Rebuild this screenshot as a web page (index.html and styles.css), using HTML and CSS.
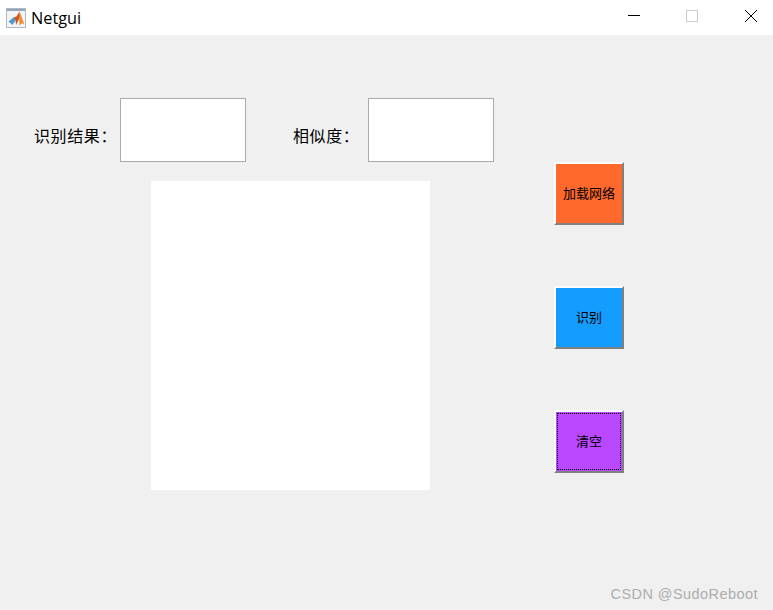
FILE: index.html
```html
<!DOCTYPE html>
<html lang="zh">
<head>
<meta charset="utf-8">
<title>Netgui</title>
<link rel="stylesheet" href="styles.css">
</head>
<body>
<div class="window">
  <header class="titlebar">
    <div class="app">
      <svg class="app-icon" width="20" height="20" viewBox="0 0 20 20">
        <rect x="0.5" y="0.5" width="19" height="19" fill="#f3f4f6" stroke="#b4b7bb"/>
        <rect x="1" y="1" width="18" height="2" fill="#8fa6bd"/>
        <path d="M2.5 13.5 L8 9 L10 11.5 L6.5 17 Z" fill="#4a9bd0"/>
        <path d="M8 9.5 L10.5 8.5 L13.5 3.5 L14 9 L10 17 L9.5 12 Z" fill="#d4501c"/>
        <path d="M13.5 3.5 C15 6 16 11 18.5 16 C16.5 15 15.5 15 13.5 17.5 C13 13 13.5 8 13.5 3.5 Z" fill="#ee8f30"/>
      </svg>
      <span class="app-name">Netgui</span>
    </div>
    <div class="controls">
      <svg width="14" height="14" viewBox="0 0 14 14"><path d="M1 6.5H13" stroke="#000" fill="none"/></svg>
      <svg width="14" height="14" viewBox="0 0 14 14"><rect x="1.5" y="1.5" width="11" height="11" stroke="#cccccc" fill="none"/></svg>
      <svg class="close" width="14" height="14" viewBox="0 0 14 14"><path d="M1 1L13 13M13 1L1 13" stroke="#000" fill="none"/></svg>
    </div>
  </header>
  <main class="figure">
    <section class="left">
      <div class="fields">
        <label class="label label-result">识别结果：</label>
        <div class="field"></div>
        <label class="label label-sim">相似度：</label>
        <div class="field"></div>
      </div>
      <div class="axes"></div>
    </section>
    <section class="buttons">
      <button class="btn btn-load">加载网络</button>
      <button class="btn btn-run">识别</button>
      <button class="btn btn-clear"><span class="focus">清空</span></button>
    </section>
  </main>
  <div class="watermark">CSDN @SudoReboot</div>
</div>
</body>
</html>
```

FILE: styles.css
```css
* { box-sizing: border-box; }
html, body { margin: 0; padding: 0; }
body {
  width: 773px;
  height: 610px;
  overflow: hidden;
  font-family: "Noto Sans CJK SC", "Liberation Sans", sans-serif;
  color: #000;
}
.window {
  position: relative;
  width: 773px;
  height: 610px;
  display: flex;
  flex-direction: column;
  background: #f0f0f0;
}
.titlebar {
  height: 35px;
  flex: none;
  background: #fff;
  display: flex;
  align-items: center;
  justify-content: space-between;
}
.app {
  display: flex;
  align-items: center;
  gap: 5px;
  padding-left: 6px;
}
.app-icon { display: block; }
.app-name {
  font-family: "Open Sans", sans-serif;
  font-size: 16.3px;
  line-height: 20px;
}
.controls {
  display: flex;
  gap: 44px;
  padding-right: 15px;
  padding-bottom: 3px;
}
.controls svg { display: block; }
.controls .close { margin-left: 1px; }
.figure {
  flex: 1;
  display: flex;
  align-items: flex-start;
  padding-top: 63px;
}
.left {
  width: 554px;
  flex: none;
}
.fields {
  display: flex;
  align-items: center;
  height: 64px;
}
.label {
  font-size: 16px;
  line-height: 20px;
  letter-spacing: 0.6px;
  white-space: nowrap;
  position: relative;
  top: 5px;
}
.label-result { margin-left: 34px; width: 86px; }
.label-sim { margin-left: 47px; width: 75px; }
.field {
  width: 126px;
  height: 64px;
  background: #fff;
  border: 1px solid #ababab;
}
.axes {
  width: 279px;
  height: 309px;
  margin: 19px 0 0 151px;
  background: #fff;
}
.buttons {
  width: 70px;
  flex: none;
  display: flex;
  flex-direction: column;
  gap: 61px;
  padding-top: 64px;
}
.btn {
  width: 70px;
  height: 63px;
  padding: 0 0 2px;
  font-family: inherit;
  font-size: 13px;
  line-height: 16px;
  color: #000;
  border-style: solid;
  border-width: 2px;
  border-color: #fcfcfc #808080 #808080 #fcfcfc;
  display: flex;
  align-items: center;
  justify-content: center;
}
.btn-load { background: #ff692b; }
.btn-run { background: #149cff; }
.btn-clear { background: #b948ff; padding: 1px; }
.focus {
  width: 100%;
  height: 100%;
  padding-bottom: 2px;
  border: 1px dotted #000;
  display: flex;
  align-items: center;
  justify-content: center;
}
.watermark {
  position: absolute;
  right: 15px;
  bottom: 6px;
  font-family: "Liberation Sans", sans-serif;
  font-size: 14.5px;
  line-height: 20px;
  letter-spacing: 0.44px;
  color: #adadad;
}
```
